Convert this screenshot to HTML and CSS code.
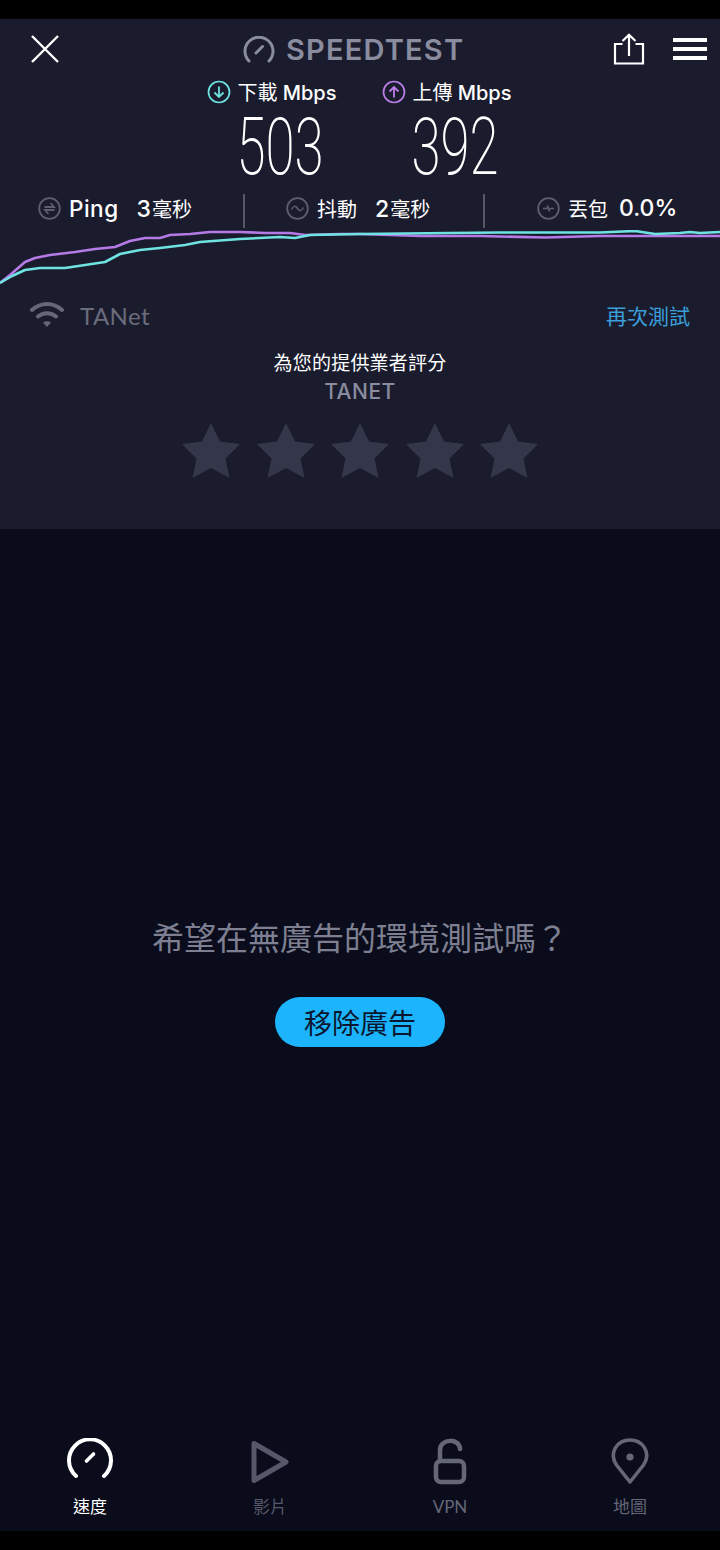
FILE: index.html
```html
<!DOCTYPE html>
<html lang="zh-Hant">
<head>
  <meta charset="UTF-8">
  <meta name="viewport" content="width=device-width, initial-scale=1.0">
  <title>Speedtest</title>
  <link rel="stylesheet" href="styles.css">
</head>
<body>
  <div class="phone">
    <div class="blackbar blackbar--top"></div>

    <section class="panel">
      <header class="topbar">
        <svg class="icon-close" width="30" height="30" viewBox="0 0 30 30">
          <path d="M2 2 L28 28 M28 2 L2 28" stroke="#fff" stroke-width="2.4" fill="none"/>
        </svg>
        <div class="logo">
          <svg width="32" height="27" viewBox="0 0 32 27">
            <path d="M6 25 A14 14 0 1 1 26 25" stroke="#8a8c9f" stroke-width="3" stroke-linecap="round" fill="none"/>
            <path d="M13 17 L19.5 10.5" stroke="#8a8c9f" stroke-width="3" stroke-linecap="round"/>
          </svg>
          <span class="logo__text">SPEEDTEST</span>
        </div>
        <div class="topbar__actions">
          <svg width="32" height="32" viewBox="0 0 32 32">
            <path d="M9.5 11 H2 V30.500 H30 V11 H22.500 M16 23 V2 M9.500 8 L16 1.800 L22.500 8" stroke="#fff" stroke-width="2.200" fill="none"/>
          </svg>
          <svg width="34" height="24" viewBox="0 0 34 24">
            <path d="M0 3 H34 M0 12 H34 M0 21 H34" stroke="#fff" stroke-width="4"/>
          </svg>
        </div>
      </header>

      <div class="speeds">
        <div class="speed">
          <div class="speed__label">
            <svg width="24" height="24" viewBox="0 0 24 24">
              <circle cx="12" cy="12" r="10.500" stroke="#6fe3e1" stroke-width="1.700" fill="none"/>
              <path d="M12 6.500 V17 M7.500 12.500 L12 17 L16.500 12.500" stroke="#6fe3e1" stroke-width="1.800" fill="none"/>
            </svg>
            <span>下載 <b>Mbps</b></span>
          </div>
          <div class="speed__value">503</div>
        </div>
        <div class="speed">
          <div class="speed__label">
            <svg width="24" height="24" viewBox="0 0 24 24">
              <circle cx="12" cy="12" r="10.500" stroke="#bb7ee8" stroke-width="1.700" fill="none"/>
              <path d="M12 17.500 V7 M7.500 11.500 L12 7 L16.500 11.500" stroke="#bb7ee8" stroke-width="1.800" fill="none"/>
            </svg>
            <span>上傳 <b>Mbps</b></span>
          </div>
          <div class="speed__value">392</div>
        </div>
      </div>

      <div class="stats">
        <div class="stat stat--ping">
          <svg width="23" height="23" viewBox="0 0 23 23">
            <circle cx="11.500" cy="11.500" r="10.300" stroke="#5c5e70" stroke-width="1.800" fill="none"/>
            <path d="M6.500 10 H16 L12.500 6 M16.500 13 H7 L10.500 17" stroke="#5c5e70" stroke-width="1.800" fill="none"/>
          </svg>
          <span class="stat__name">Ping</span>
          <span class="stat__num">3<i>毫秒</i></span>
        </div>
        <div class="stat stat--jitter">
          <svg width="23" height="23" viewBox="0 0 23 23">
            <circle cx="11.500" cy="11.500" r="10.300" stroke="#5c5e70" stroke-width="1.800" fill="none"/>
            <path d="M5.500 12.500 C7.500 8.500 9.500 8.500 11.500 11.500 C13.500 14.500 15.500 14.500 17.500 10.500" stroke="#5c5e70" stroke-width="1.500" fill="none"/>
          </svg>
          <span class="stat__name stat__name--cjk">抖動</span>
          <span class="stat__num">2<i>毫秒</i></span>
        </div>
        <div class="stat stat--loss">
          <svg width="23" height="23" viewBox="0 0 23 23">
            <circle cx="11.500" cy="11.500" r="10.300" stroke="#5c5e70" stroke-width="1.800" fill="none"/>
            <path d="M6 11.500 H9.800 L10.800 9.500 L12.200 13.500 L13.200 11.500 H17" stroke="#5c5e70" stroke-width="1.500" fill="none"/>
          </svg>
          <span class="stat__name stat__name--cjk">丟包</span>
          <span class="stat__num stat__num--loss">0.0%</span>
        </div>
      </div>

      <svg class="chart" width="720" height="56" viewBox="0 230 720 56">
        <polyline class="chart__line chart__line--up" points="0,283 10,275 25,262 35,258 50,255 75,252 95,249 115,247 130,241 145,238 160,238 170,235 190,234 210,232 240,232 265,233 290,233 305,235 340,234 360,234 420,236 480,236 545,237.500 600,236 720,236"/>
        <polyline class="chart__line chart__line--down" points="0,283 12,276 25,270 40,268 65,268 85,265 105,262 120,254 140,250 160,248 185,245 200,242 240,239 280,237 295,238 310,235 360,234 450,233 500,232.500 600,232.500 635,231 655,234 680,233 690,232 700,233 720,232"/>
      </svg>

      <div class="network">
        <div class="network__name">
          <svg width="34" height="28" viewBox="0 0 34 28">
            <path d="M2 9 C11 1 23 1 32 9 M8 15.500 C13 11 21 11 26 15.500" stroke="#656776" stroke-width="4" stroke-linecap="round" fill="none"/>
            <path d="M13 21.500 C15.500 19.800 18.500 19.800 21 21.500 L17 26 Z" fill="#656776"/>
          </svg>
          <span>TANet</span>
        </div>
        <span class="network__retry">再次測試</span>
      </div>

      <div class="rate">
        <div class="rate__title">為您的提供業者評分</div>
        <div class="rate__isp">TANET</div>
        <div class="rate__stars">
          <svg class="star" width="58" height="55" viewBox="0 0 58 55"><path d="M29 0 L38 18.500 L58 21 L43.500 35.500 L47.500 55 L29 45 L10.500 55 L14.500 35.500 L0 21 L20 18.500 Z"/></svg>
          <svg class="star" width="58" height="55" viewBox="0 0 58 55"><path d="M29 0 L38 18.500 L58 21 L43.500 35.500 L47.500 55 L29 45 L10.500 55 L14.500 35.500 L0 21 L20 18.500 Z"/></svg>
          <svg class="star" width="58" height="55" viewBox="0 0 58 55"><path d="M29 0 L38 18.500 L58 21 L43.500 35.500 L47.500 55 L29 45 L10.500 55 L14.500 35.500 L0 21 L20 18.500 Z"/></svg>
          <svg class="star" width="58" height="55" viewBox="0 0 58 55"><path d="M29 0 L38 18.500 L58 21 L43.500 35.500 L47.500 55 L29 45 L10.500 55 L14.500 35.500 L0 21 L20 18.500 Z"/></svg>
          <svg class="star" width="58" height="55" viewBox="0 0 58 55"><path d="M29 0 L38 18.500 L58 21 L43.500 35.500 L47.500 55 L29 45 L10.500 55 L14.500 35.500 L0 21 L20 18.500 Z"/></svg>
        </div>
      </div>
    </section>

    <main class="promo">
      <p class="promo__text">希望在無廣告的環境測試嗎？</p>
      <button class="promo__btn">移除廣告</button>
    </main>

    <nav class="tabs">
      <div class="tab tab--active">
        <svg width="48" height="48" viewBox="0 0 48 48">
          <path d="M10 38 A21 21 0 1 1 38 38" stroke="#fff" stroke-width="4" stroke-linecap="round" fill="none"/>
          <path d="M20.500 23 L27.500 16" stroke="#fff" stroke-width="3.600" stroke-linecap="round"/>
        </svg>
        <span>速度</span>
      </div>
      <div class="tab">
        <svg width="48" height="48" viewBox="0 0 48 48">
          <path d="M8 5.500 L40 24 L8 42.500 Z" stroke="#565869" stroke-width="5" stroke-linejoin="round" fill="none"/>
        </svg>
        <span>影片</span>
      </div>
      <div class="tab">
        <svg width="48" height="48" viewBox="0 0 48 48">
          <path d="M14 22 V12 C14 0 34 0 34 11" stroke="#656776" stroke-width="4.500" stroke-linecap="round" fill="none"/>
          <rect x="10" y="23" width="28" height="21" rx="5" stroke="#656776" stroke-width="4.500" fill="none"/>
        </svg>
        <span>VPN</span>
      </div>
      <div class="tab">
        <svg width="48" height="48" viewBox="0 0 48 48">
          <path d="M24 44 L10.500 27 C2 14 12 2 24 2 C36 2 46 14 37.500 27 Z" stroke="#656776" stroke-width="3.600" stroke-linejoin="round" fill="none"/>
          <circle cx="24" cy="19" r="3.600" fill="#656776"/>
        </svg>
        <span>地圖</span>
      </div>
    </nav>

    <div class="blackbar"></div>
  </div>
</body>
</html>
```

FILE: styles.css
```css
* {
  box-sizing: border-box;
}

html, body {
  margin: 0;
  padding: 0;
  background: #000;
}

body {
  font-family: Lato, "Noto Sans CJK TC", sans-serif;
  color: #fff;
}

.phone {
  width: 720px;
  height: 1550px;
  display: flex;
  flex-direction: column;
  overflow: hidden;
  background: #0a0c1c;
}

.blackbar {
  height: 19px;
  flex: none;
  background: #000;
}

/* top panel with the results */
.panel {
  height: 510px;
  flex: none;
  background: #1a1c2e;
}

.topbar {
  display: flex;
  align-items: center;
  height: 60px;
  padding: 0 13px 0 30px;
}

.logo {
  display: flex;
  align-items: center;
  gap: 11px;
  margin-left: 183px;
}

.logo__text {
  font-family: Inter, sans-serif;
  font-size: 29px;
  font-weight: 600;
  color: #8a8c9f;
  letter-spacing: 1.200px;
}

.topbar__actions {
  display: flex;
  align-items: center;
  gap: 28px;
  margin-left: auto;
}

.speeds {
  display: flex;
  margin-left: 193px;
}

.speed {
  width: 175px;
  display: flex;
  flex-direction: column;
  align-items: center;
}

.speed__label {
  display: flex;
  align-items: center;
  gap: 7px;
  height: 26px;
  margin-right: 18px;
  font-size: 20px;
  line-height: 24px;
  white-space: nowrap;
}

.speed__label b {
  font-family: Inter, sans-serif;
  font-weight: 500;
}

.speed__value {
  font-family: Roboto, sans-serif;
  font-size: 80px;
  font-weight: 200;
  line-height: 84px;
  height: 89px;
  transform: scaleX(0.66);
}

.stats {
  display: flex;
  height: 34px;
}

.stat {
  display: flex;
  align-items: center;
  height: 34px;
  padding-bottom: 6px;
  font-size: 21px;
  white-space: nowrap;
}

.stat--ping {
  width: 245px;
  padding-left: 38px;
  border-right: 2px solid #56586a;
}

.stat--jitter {
  width: 240px;
  padding-left: 41px;
  border-right: 2px solid #56586a;
}

.stat--loss {
  padding-left: 52px;
}

.stat__name {
  margin-left: 8px;
  font-family: Inter, sans-serif;
  font-size: 22.500px;
  font-weight: 500;
  letter-spacing: 0.500px;
}

.stat__name--cjk {
  font-family: "Noto Sans CJK TC", sans-serif;
  font-weight: 400;
  font-size: 20px;
  letter-spacing: 0;
}

.stat__num {
  margin-left: 18px;
  font-family: Inter, sans-serif;
  font-size: 23px;
  font-weight: 500;
}

.stat__num i {
  margin-left: 1px;
  font-family: "Noto Sans CJK TC", sans-serif;
  font-style: normal;
  font-weight: 400;
  font-size: 20px;
}

.stat__num--loss {
  margin-left: 11px;
}

.chart {
  display: block;
  margin-top: 2px;
}

.chart__line {
  fill: none;
  stroke-width: 2.600;
  stroke-linejoin: round;
}

.chart__line--up {
  stroke: #b57ae6;
}

.chart__line--down {
  stroke: #6fe3e1;
}

.network {
  display: flex;
  align-items: center;
  justify-content: space-between;
  height: 30px;
  margin-top: 14px;
  padding: 0 30px;
}

.network__name {
  display: flex;
  align-items: center;
  gap: 16px;
  font-family: Lato, sans-serif;
  font-size: 24px;
  letter-spacing: 0.400px;
  color: #6a6c7c;
}

.network__retry {
  font-size: 21px;
  color: #3a9fdb;
}

.rate {
  display: flex;
  flex-direction: column;
  align-items: center;
  margin-top: 19px;
}

.rate__title {
  font-size: 19px;
  line-height: 28px;
  letter-spacing: 0.200px;
}

.rate__isp {
  margin-top: 2px;
  font-family: Inter, sans-serif;
  font-size: 21px;
  font-weight: 500;
  line-height: 26px;
  letter-spacing: 0.500px;
  color: #8a8c9f;
}

.rate__stars {
  display: flex;
  gap: 16.500px;
  margin-top: 18px;
}

.star {
  fill: #343649;
}

/* ad area */
.promo {
  flex: 1;
  display: flex;
  flex-direction: column;
  align-items: center;
  padding-top: 386px;
}

.promo__text {
  margin: 0;
  font-size: 32px;
  font-weight: 400;
  line-height: 46px;
  color: #7e8092;
}

.promo__btn {
  width: 170px;
  height: 50px;
  margin-top: 36px;
  padding: 0;
  border: 0;
  border-radius: 25px;
  background: #1cb5fd;
  font-family: "Noto Sans CJK TC", sans-serif;
  font-size: 28px;
  color: #0b1730;
}

.tabs {
  flex: none;
  display: grid;
  grid-template-columns: repeat(4, 1fr);
  height: 112px;
  padding-top: 19px;
}

.tab {
  display: flex;
  flex-direction: column;
  align-items: center;
  font-size: 17px;
  color: #565869;
}

.tab span {
  margin-top: 9px;
  line-height: 24px;
}

.tab:nth-child(3) span,
.tab:nth-child(4) span {
  color: #656776;
}

.tab--active span {
  color: #fff;
}
```
